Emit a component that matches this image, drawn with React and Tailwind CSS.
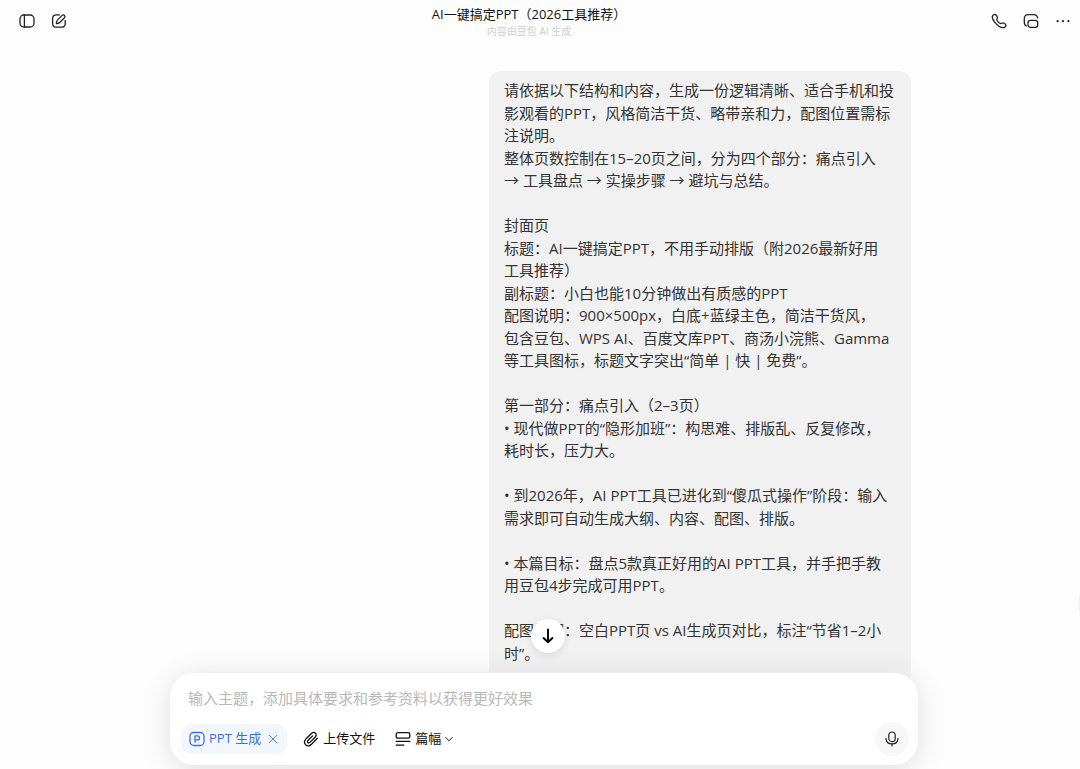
import React from 'react';

const message = `请依据以下结构和内容，生成一份逻辑清晰、适合手机和投
影观看的PPT，风格简洁干货、略带亲和力，配图位置需标
注说明。
整体页数控制在15–20页之间，分为四个部分：痛点引入
→ 工具盘点 → 实操步骤 → 避坑与总结。

封面页
标题：AI一键搞定PPT，不用手动排版（附2026最新好用
工具推荐）
副标题：小白也能10分钟做出有质感的PPT
配图说明：900×500px，白底+蓝绿主色，简洁干货风，
包含豆包、WPS AI、百度文库PPT、商汤小浣熊、Gamma
等工具图标，标题文字突出“简单 | 快 | 免费”。

第一部分：痛点引入（2–3页）
• 现代做PPT的“隐形加班”：构思难、排版乱、反复修改，
耗时长，压力大。

• 到2026年，AI PPT工具已进化到“傻瓜式操作”阶段：输入
需求即可自动生成大纲、内容、配图、排版。

• 本篇目标：盘点5款真正好用的AI PPT工具，并手把手教
用豆包4步完成可用PPT。

配图说明：空白PPT页 vs AI生成页对比，标注“节省1–2小
时”。`;

const Icon = ({ children, className = 'size-4', strokeWidth = 1.3 }) => (
  <svg
    viewBox="0 0 16 16"
    className={className}
    fill="none"
    stroke="currentColor"
    strokeWidth={strokeWidth}
    strokeLinecap="round"
    strokeLinejoin="round"
    aria-hidden="true"
  >
    {children}
  </svg>
);

const HeaderButton = ({ label, children }) => (
  <button type="button" aria-label={label} className="flex size-8 items-center justify-center">
    <Icon>{children}</Icon>
  </button>
);

const Header = () => (
  <header className="flex shrink-0 items-start pt-[5px] pr-px pl-[11px] text-[#222]">
    <HeaderButton label="侧边栏">
      <rect x="1" y="2" width="14" height="12" rx="3.8" />
      <path d="M5.4 2v12" />
    </HeaderButton>
    <HeaderButton label="新对话">
      <path d="M8.6 1.8H5.6C2.8 1.8 1.6 3 1.6 5.6v4.8c0 2.6 1.2 3.8 4 3.8h4.8c2.6 0 3.8-1.2 3.8-3.8V7.4" />
      <path d="M5.4 10.6c-.2-1.6.2-2.7 1.2-3.7l4.3-4.3c.9-.9 1.9-.9 2.6-.2s.7 1.7-.2 2.6L9 9.3c-1 1-2.1 1.4-3.6 1.3z" />
    </HeaderButton>
    <div className="flex flex-1 flex-col items-center">
      <h1 className="text-[13px] leading-[18px] text-[#111]">AI一键搞定PPT（2026工具推荐）</h1>
      <p className="text-[10px] leading-4 text-[#cfcfcf]">内容由豆包 AI 生成</p>
    </div>
    <HeaderButton label="通话">
      <path d="M2.3 2C.9 3.2 1.1 6 3.8 9.3c2.9 3.5 6.9 5.9 9.5 5.2 1.3-.4 1.9-1.6 1.5-2.6-.4-.9-1.6-1.8-2.8-2-1.1-.2-1.5.9-2.3.7C8.5 10.3 6.5 8.3 5.9 7.2c-.4-.9.7-1.4.5-2.5C6.2 3.5 5.5 2.2 4.6 1.6c-.8-.5-1.6-.2-2.3.4z" />
    </HeaderButton>
    <HeaderButton label="悬浮窗">
      <path d="M3.4 13C2 12.5 1.3 11.2 1.3 9.2V5.7c0-2.8 1.3-4.1 4.1-4.1h5.2c2.5 0 3.7 1 3.9 3.2" />
      <rect x="5" y="7.3" width="9.7" height="7" rx="2.4" />
    </HeaderButton>
    <HeaderButton label="更多">
      <g fill="currentColor" stroke="none">
        <circle cx="2.6" cy="8.2" r="1.1" />
        <circle cx="8" cy="8.2" r="1.1" />
        <circle cx="13.4" cy="8.2" r="1.1" />
      </g>
    </HeaderButton>
  </header>
);

const Composer = () => (
  <form className="rounded-3xl bg-white pt-[11px] pr-[9px] pb-[9px] pl-[11px] shadow-[0_4px_28px_rgba(0,0,0,0.13)]">
    <input
      type="text"
      aria-label="输入主题"
      placeholder="输入主题，添加具体要求和参考资料以获得更好效果"
      className="block h-7 w-full px-[7px] text-[15px] outline-none placeholder:text-[#b8b8b8]"
    />
    <div className="mt-[10px] flex items-center text-[13px] text-[#111]">
      <button type="button" className="flex h-[30px] items-center rounded-[10px] bg-[#f2f6ff] px-2 text-[#3d6fe0]">
        <Icon>
          <rect x="1" y="1.5" width="14" height="13" rx="3.8" />
          <path d="M6 11.2V4.9h2.5a2 2 0 0 1 0 4H6" />
        </Icon>
        <span className="ml-1">PPT 生成</span>
        <Icon className="ml-1.5 size-3" strokeWidth={1.2}>
          <path d="M3 3l10 10M13 3L3 13" />
        </Icon>
      </button>
      <button type="button" className="ml-4 flex items-center gap-1">
        <Icon>
          <path d="M14.4 7.3l-5.9 5.9c-1.9 1.9-4.3 2-5.9.5-1.5-1.6-1.4-4 .5-5.900l5.300-5.300c1.300-1.300 2.900-1.400 4-.3s1 2.700-.3 4l-5.200 5.200c-.7.7-1.500.7-2.100.2-.5-.6-.5-1.400.2-2.100l4.600-4.600" />
        </Icon>
        上传文件
      </button>
      <button type="button" className="ml-5 flex items-center">
        <Icon>
          <rect x="1.2" y="1.6" width="13.6" height="5.6" rx="1.8" />
          <path d="M1.2 10.4h13.6M1.2 14.2h7.6" />
        </Icon>
        <span className="ml-1">篇幅</span>
        <Icon className="ml-1 size-2" strokeWidth={2}>
          <path d="M1.5 5L8 11.5 14.5 5" />
        </Icon>
      </button>
      <button
        type="button"
        aria-label="语音输入"
        className="ml-auto flex size-[34px] items-center justify-center rounded-full bg-[#f7f7f7] text-[#222]"
      >
        <Icon strokeWidth={1.2}>
          <rect x="4.8" y="1" width="6.4" height="9.6" rx="3.2" />
          <path d="M2 7.6c.2 3.3 2.6 5.3 6 5.3s5.8-2 6-5.3M8 12.9V15" />
        </Icon>
      </button>
    </div>
  </form>
);

const App = () => {
  return (
    <div className="relative flex h-screen flex-col overflow-hidden bg-[#fdfdfd] font-['Open_Sans','Noto_Sans_CJK_SC',sans-serif]">
      <Header />
      <main className="flex min-h-0 flex-1 justify-center overflow-hidden pt-8 pl-2">
        <div className="flex w-full max-w-[748px] justify-end pr-[7px]">
          <div className="w-[422px] rounded-t-xl bg-[#f1f1f1] px-[15px] py-2 text-[15px] leading-normal whitespace-pre text-[#333]">
            {message}
          </div>
        </div>
      </main>

      {/* Side handle, mostly tucked behind the window edge */}
      <button
        type="button"
        aria-label="展开"
        className="absolute -right-[46px] bottom-[142px] size-12 rounded-full bg-[#f3f3f3]"
      />

      {/* Composer floats over the end of the conversation */}
      <div className="absolute inset-x-0 bottom-0 flex justify-center bg-linear-to-b from-transparent to-[#fdfdfd] to-20% pt-2 pb-1 pl-2">
        <div className="relative w-full max-w-[748px]">
          <div className="absolute inset-x-0 bottom-full flex justify-center pb-5 pl-2">
            <button
              type="button"
              aria-label="滚动到底部"
              className="flex size-[34px] items-center justify-center rounded-full bg-white text-black shadow-[0_2px_8px_rgba(0,0,0,0.1)]"
            >
              <Icon strokeWidth={1.9}>
                <path d="M8 1.5v12.5M3.6 10L8 14.2l4.4-4.2" />
              </Icon>
            </button>
          </div>
          <Composer />
        </div>
      </div>
    </div>
  );
};

export default App;
